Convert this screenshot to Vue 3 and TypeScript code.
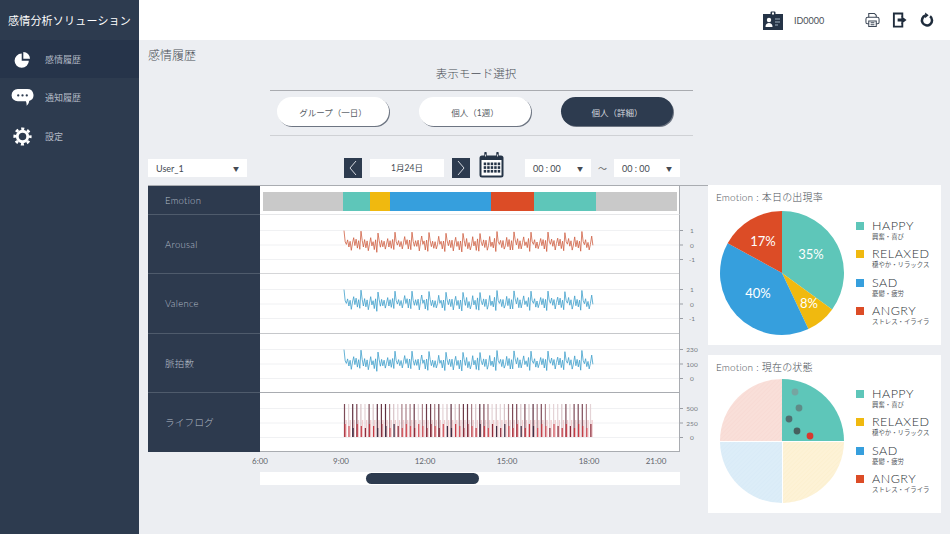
<template>
  <div class="app">
    <aside class="sidebar">
      <div class="brand">感情分析ソリューション</div>
      <nav>
        <a class="nav-item active">
          <svg class="nav-icon" viewBox="0 0 24 24" fill="#fff">
            <path d="M11 4.500A9 9 0 1 0 20 13.500H11Z" />
            <path d="M13 2.500A8.500 8.500 0 0 1 21.500 11H13Z" />
          </svg>
          <span>感情履歴</span>
        </a>
        <a class="nav-item">
          <svg class="nav-icon chat" viewBox="0 0 24 20" fill="#fff">
            <path d="M7 1h10a6.500 6.500 0 0 1 2 12.700c0 1.800 -1 3.700 -2.800 5.100c.3 -1.600 .1 -3 -.6 -4.800H7A6.500 6.500 0 0 1 7 1Z" />
            <circle cx="7.500" cy="7.800" r="1.200" fill="#2d3b4f" />
            <circle cx="12" cy="7.800" r="1.200" fill="#2d3b4f" />
            <circle cx="16.500" cy="7.800" r="1.200" fill="#2d3b4f" />
          </svg>
          <span>通知履歴</span>
        </a>
        <a class="nav-item">
          <svg class="nav-icon" viewBox="0 0 24 24" fill="none" stroke="#fff">
            <circle cx="12" cy="12" r="6.600" stroke-width="3.600" />
            <circle cx="12" cy="12" r="9.800" stroke-width="3.400" stroke-dasharray="3.900 3.800" stroke-dashoffset="1.950" />
          </svg>
          <span>設定</span>
        </a>
      </nav>
    </aside>

    <div class="page">
      <header class="topbar">
        <svg class="id-card" viewBox="0 0 20 19">
          <path d="M7.500 3V1.500a1 1 0 0 1 1 -1h3a1 1 0 0 1 1 1V3H20v16H0V3Z" fill="#253447" />
          <rect x="9" y="1.500" width="2" height="2" fill="#fff" />
          <circle cx="6" cy="9" r="2.200" fill="#fff" />
          <path d="M2.500 16c0 -3 1.500 -4 3.500 -4s3.500 1 3.500 4Z" fill="#fff" />
          <path d="M12 8h5M12 11h5M12 14h3" stroke="#9fb0c0" stroke-width="1.200" />
        </svg>
        <span class="user-id">ID0000</span>
        <div class="tools">
          <svg class="tool printer" viewBox="0 0 16 16" fill="none" stroke="#3b4655" stroke-width="1.100">
            <path d="M4 5V1h6l2 2v2" />
            <path d="M4 12H2.500A1.500 1.500 0 0 1 1 10.500V7a2 2 0 0 1 2 -2h10a2 2 0 0 1 2 2v3.500a1.500 1.500 0 0 1 -1.500 1.500H12" />
            <path d="M4 9h8v6H4ZM6 11h4M6 13h4" />
          </svg>
          <svg class="tool" viewBox="0 0 16 16" fill="#1f2c3c">
            <path d="M1 0h11v5h-2V2H3v12h7v-3h2v5H1Z" />
            <path d="M6 6.500h4V3.800L15.500 8 10 12.200V9.500H6Z" />
          </svg>
          <svg class="tool power" viewBox="0 0 16 16" fill="none">
            <path d="M11.800 4.100A5.400 5.400 0 1 1 7 3.200" stroke="#1f2c3c" stroke-width="2.700" />
            <path d="M6.500 0v6.200L10.300 3Z" fill="#1f2c3c" />
          </svg>
        </div>
      </header>

      <main class="content">
        <h1 class="page-title">感情履歴</h1>
        <section class="mode">
          <div class="mode-title">表示モード選択</div>
          <div class="mode-buttons">
            <button v-for="m in modes" :key="m.label" class="mode-btn" :class="{ selected: m.selected }">{{ m.label }}</button>
          </div>
        </section>

        <div class="workspace">
          <div class="controls">
            <div class="select user-select"><span>User_1</span><i>▼</i></div>
            <button class="step prev">
              <svg viewBox="0 0 18 20" fill="none" stroke="#e6e9ee" stroke-width="0.900"><path d="M12 3 6 10l6 7" /></svg>
            </button>
            <div class="date">1月24日</div>
            <button class="step">
              <svg viewBox="0 0 18 20" fill="none" stroke="#e6e9ee" stroke-width="0.900"><path d="m6 3 6 7-6 7" /></svg>
            </button>
            <svg class="calendar" viewBox="0 0 25 26">
              <rect x="0.500" y="3.500" width="24" height="22" rx="2.500" fill="#253447" />
              <rect x="2.500" y="8" width="20" height="15.500" fill="#fff" />
              <path d="M6.500 1v5M18.500 1v5" stroke="#253447" stroke-width="2.400" stroke-linecap="round" />
              <path d="M6.500 2.500v2M18.500 2.500v2" stroke="#fff" stroke-width="0.800" />
              <g fill="#253447">
                <template v-for="r in 3" :key="r">
                  <rect v-for="c in 5" :key="c" :x="1.200 + c * 3.500" :y="6.800 + r * 3.700" width="2.500" height="2.700" />
                </template>
              </g>
            </svg>
            <div class="select time-select first"><span>00 : 00</span><i>▼</i></div>
            <span class="tilde">～</span>
            <div class="select time-select"><span>00 : 00</span><i>▼</i></div>
          </div>

          <div class="chart-col">
            <div class="chart">
              <div class="row-label emotion-label">Emotion</div>
              <div class="emotion-cell">
                <div class="emotion-bar">
                  <span v-for="(s, i) in segments" :key="i" :style="{ width: s.w + 'px', background: s.color }"></span>
                </div>
              </div>
              <template v-for="row in rows" :key="row.label">
                <div class="row-label" :class="{ last: row.label === 'ライフログ' }" :style="{ height: row.h + 'px' }">{{ row.label }}</div>
                <svg class="plot" width="448" :height="row.h" :viewBox="`0 0 448 ${row.h}`">
                  <rect width="420" :height="row.h" fill="#fff" />
                  <line v-for="t in row.ticks" :key="t.y" x1="0" x2="420" :y1="t.y" :y2="t.y" stroke="#f0f1f3" />
                  <line v-for="t in row.ticks" :key="'m' + t.y" x1="420" x2="423" :y1="t.y" :y2="t.y" stroke="#9a9ea5" />
                  <text v-for="t in row.ticks" :key="'t' + t.y" x="432" :y="t.y + 2.500" text-anchor="middle" class="tick">{{ t.label }}</text>
                  <polyline v-if="row.color" :points="wave" fill="none" :stroke="row.color" stroke-width="0.800" />
                  <g v-else>
                    <line v-for="(b, i) in bars" :key="i" :x1="b.x" :x2="b.x" :y1="b.top" y2="44" :stroke="b.color" :stroke-width="b.w" />
                  </g>
                  <line x1="0" x2="420" :y1="row.h - 0.500" :y2="row.h - 0.500" :stroke="row.line" />
                  <line x1="419.500" x2="419.500" y1="0" :y2="row.h" stroke="#a9acb1" />
                </svg>
              </template>
            </div>
            <svg class="time-axis" width="560" height="16" viewBox="0 0 560 16">
              <text v-for="t in times" :key="t.label" :x="t.x" y="10" text-anchor="middle">{{ t.label }}</text>
            </svg>
            <div class="scrollbar"><div class="thumb"></div></div>
          </div>

          <div class="panels">
            <section v-for="p in panels" :key="p.title" class="panel" :class="p.kind">
              <h2>{{ p.title }}</h2>
              <div class="panel-body">
                <svg class="pie" width="126" height="126" viewBox="-63 -63 126 126">
                  <defs>
                    <pattern v-for="q in hatch" :id="q.id + p.kind" :key="q.id" width="3" height="3" patternUnits="userSpaceOnUse" patternTransform="rotate(45)">
                      <rect width="3" height="3" :fill="q.bg" />
                      <line x1="0" x2="0" y1="0" y2="3" :stroke="q.fg" stroke-width="1" />
                    </pattern>
                  </defs>
                  <template v-if="p.kind === 'share'">
                    <path v-for="s in slices" :key="s.label" :d="s.d" :fill="s.color" />
                    <text v-for="s in slices" :key="'l' + s.label" :x="s.tx" :y="s.ty" text-anchor="middle" class="pct">{{ s.label }}</text>
                  </template>
                  <template v-else>
                    <path d="M0 -62A62 62 0 0 1 62 0H0Z" fill="#5ec6b9" />
                    <path d="M62 1A62 62 0 0 1 1 62V1Z" fill="url(#hatch-ystate)" />
                    <path d="M0 62A62 62 0 0 1 -62 1H0Z" fill="url(#hatch-bstate)" />
                    <path d="M-62 0A62 62 0 0 1 0 -62V0Z" fill="url(#hatch-rstate)" />
                    <circle v-for="(d, i) in dots" :key="i" :cx="d.x" :cy="d.y" r="3.400" :fill="d.color" :opacity="d.o" />
                  </template>
                </svg>
                <ul class="legend">
                  <li v-for="l in legend" :key="l.name">
                    <i :style="{ background: l.color }"></i>
                    <div>
                      <strong>{{ l.name }}</strong>
                      <small>{{ l.sub }}</small>
                    </div>
                  </li>
                </ul>
              </div>
            </section>
          </div>
        </div>
      </main>
    </div>
  </div>
</template>

<script setup lang="ts">
const modes = [
  { label: 'グループ（一日）', selected: false },
  { label: '個人（1週）', selected: false },
  { label: '個人（詳細）', selected: true },
]

const TEAL = '#5ec6b9'
const YELLOW = '#f0b90f'
const BLUE = '#369fdd'
const RED = '#dc4c26'
const GREY = '#c9c9c9'

const segments = [
  { w: 80, color: GREY },
  { w: 27, color: TEAL },
  { w: 20, color: YELLOW },
  { w: 101, color: BLUE },
  { w: 43, color: RED },
  { w: 62, color: TEAL },
  { w: 81, color: GREY },
]

// one period of the signal, repeated with a little noise
const shape = [-14, -4, 2, -5, 4, -3, 7, 0, -8, 2, -4, 6, -5, 8]
const noise = (i: number) => Math.abs((Math.sin(i * 12.9898) * 43758.5453) % 1)

const wave = Array.from({ length: 206 }, (_, i) => {
  const y = 29 + shape[i % 14] * 0.85 + (noise(i) - 0.5) * 3
  return `${(84 + i * 1.214).toFixed(1)},${y.toFixed(1)}`
}).join(' ')

const tallColors = ['#7d4a57', '#d8c3c7', '#5f3040', '#a98088', '#e4d3d6', '#6c3a48']
const lowColors = ['#c63a44', '#3f2f45', '#d4525a', '#8f2b3a']
const bars: { x: number; top: number; color: string; w: number }[] = []
for (let i = 0; i < 61; i++) {
  const x = 84.5 + i * 4.1
  const n = noise(i + 7)
  bars.push({ x: x + 1.6, top: 27, color: '#f2cdd0', w: 1.4 })
  bars.push({ x, top: 11, color: tallColors[Math.floor(n * 6)], w: 1.2 })
  bars.push({ x: x + 0.4, top: 31 + (i % 3) * 2, color: lowColors[Math.floor(n * 4)], w: 1.2 })
}

const rows = [
  { label: 'Arousal', h: 59, color: '#cf5f42', line: '#d5d6d8', ticks: [{ y: 15.5, label: '1' }, { y: 30, label: '0' }, { y: 44.5, label: '-1' }] },
  { label: 'Valence', h: 60, color: '#3f9fcb', line: '#c6c8cb', ticks: [{ y: 15.5, label: '1' }, { y: 30, label: '0' }, { y: 44.5, label: '-1' }] },
  { label: '脈拍数', h: 59, color: '#3f9fcb', line: '#a9acb1', ticks: [{ y: 15.5, label: '230' }, { y: 30, label: '100' }, { y: 44.5, label: '0' }] },
  { label: 'ライフログ', h: 59, color: '', line: '#a9acb1', ticks: [{ y: 15.5, label: '500' }, { y: 30, label: '250' }, { y: 44.5, label: '0' }] },
]

const times = [
  { label: '6:00', x: 112 },
  { label: '9:00', x: 193 },
  { label: '12:00', x: 277 },
  { label: '15:00', x: 359 },
  { label: '18:00', x: 441 },
  { label: '21:00', x: 508 },
]

const R = 62
const pieData = [
  { share: 35, color: TEAL, label: '35%', tx: 29, ty: -14.5 },
  { share: 8, color: YELLOW, label: '8%', tx: 27, ty: 34.5 },
  { share: 40, color: BLUE, label: '40%', tx: -24, ty: 24.5 },
  { share: 17, color: RED, label: '17%', tx: -19, ty: -27.5 },
]

let acc = 0
const point = (pct: number) => {
  const a = (pct / 100) * Math.PI * 2
  return [Math.sin(a) * R, -Math.cos(a) * R]
}
const slices = pieData.map((p) => {
  const [x0, y0] = point(acc)
  const [x1, y1] = point(acc + p.share)
  acc += p.share
  return {
    ...p,
    d: `M0 0L${x0.toFixed(2)} ${y0.toFixed(2)}A${R} ${R} 0 0 1 ${x1.toFixed(2)} ${y1.toFixed(2)}Z`,
  }
})

const hatch = [
  { id: 'hatch-y', bg: '#fdf2d6', fg: '#fbeecb' },
  { id: 'hatch-b', bg: '#dcedf8', fg: '#d6e9f6' },
  { id: 'hatch-r', bg: '#f9dfd9', fg: '#f7d8d1' },
]

const dots = [
  { x: 13, y: -49, color: '#7f9a99', o: 0.75 },
  { x: 17, y: -33, color: '#5f8482', o: 0.9 },
  { x: 7, y: -22, color: '#4f6f70', o: 1 },
  { x: 15, y: -10, color: '#46605f', o: 1 },
  { x: 28, y: -5, color: '#d8382f', o: 1 },
]

const legend = [
  { name: 'HAPPY', sub: '興奮・喜び', color: TEAL },
  { name: 'RELAXED', sub: '穏やか・リラックス', color: YELLOW },
  { name: 'SAD', sub: '憂鬱・疲労', color: BLUE },
  { name: 'ANGRY', sub: 'ストレス・イライラ', color: RED },
]

const panels = [
  { title: 'Emotion : 本日の出現率', kind: 'share' },
  { title: 'Emotion : 現在の状態', kind: 'state' },
]
</script>

<style>
html,
body {
  margin: 0;
  background: #eceef2;
}
</style>

<style scoped>
.app {
  display: flex;
  width: 950px;
  height: 534px;
  overflow: hidden;
  font-family: Lato, "Noto Sans CJK JP", sans-serif;
  color: #4a4f57;
  background: #eceef2;
}

.sidebar {
  width: 139px;
  flex: none;
  background: #2d3b4f;
  color: #fff;
}

.brand {
  height: 40px;
  line-height: 41px;
  padding-left: 8px;
  font-size: 11px;
  letter-spacing: 0.2px;
  white-space: nowrap;
}

.nav-item {
  display: flex;
  align-items: center;
  height: 39px;
  font-size: 9px;
  color: #b3bac5;
}

.nav-item.active {
  height: 38px;
  background: #26344a;
}

.nav-icon {
  width: 19px;
  height: 19px;
  margin: 0 13px;
  flex: none;
}

.nav-icon.chat {
  width: 23px;
  margin: 0 11px;
}

.page {
  flex: 1;
  min-width: 0;
}

.topbar {
  display: flex;
  align-items: center;
  height: 40px;
  background: #fff;
  padding-left: 624px;
  box-sizing: border-box;
}

.id-card {
  width: 20px;
  height: 19px;
}

.user-id {
  margin-left: 11px;
  font-size: 9px;
  color: #4a4f57;
}

.tools {
  display: flex;
  align-items: center;
  gap: 12px;
  margin-left: 41px;
}

.tool {
  width: 15px;
  height: 16px;
}

.content {
  padding: 7px 0 0 9px;
}

.page-title {
  margin: 0;
  height: 16px;
  font-size: 12px;
  line-height: 18px;
  font-weight: 300;
  color: #4a4f57;
}

.mode {
  width: 423px;
  margin-left: 122px;
  border-bottom: 1px solid #cfd1d5;
}

.mode-title {
  height: 27px;
  padding-right: 11px;
  line-height: 22px;
  text-align: center;
  font-size: 11.500px;
  font-weight: 300;
  color: #4a4f57;
  border-bottom: 1px solid #a9abb0;
}

.mode-buttons {
  display: flex;
  gap: 30px;
  padding: 6px 0 9px 7px;
}

.mode-btn {
  width: 112px;
  height: 29px;
  padding: 0;
  border: none;
  border-radius: 15px;
  background: #fff;
  box-shadow: 1px 1px 0 #6d7582;
  font: inherit;
  font-size: 8.500px;
  color: #555b64;
}

.mode-btn.selected {
  background: #2d3b4f;
  color: #d5d9df;
}

.workspace {
  display: grid;
  grid-template-columns: 560px 233px;
  grid-template-rows: 20px auto;
  row-gap: 7px;
  margin-top: 22px;
}

.controls {
  grid-column: 1 / 3;
  display: flex;
  align-items: center;
}

.select {
  display: flex;
  align-items: center;
  justify-content: space-between;
  height: 18px;
  box-sizing: border-box;
  padding: 0 8px;
  background: #fff;
  font-size: 9px;
  color: #444a53;
}

.select i {
  font-style: normal;
  font-size: 6px;
}

.user-select {
  width: 99px;
}

.step {
  display: block;
  width: 18px;
  height: 20px;
  padding: 0;
  border: none;
  background: #2d3b4f;
}

.step svg {
  display: block;
}

.prev {
  margin-left: 97px;
}

.date {
  width: 74px;
  height: 18px;
  margin: 0 8px;
  background: #fff;
  font-size: 8.500px;
  line-height: 18px;
  text-align: center;
  color: #444a53;
}

.calendar {
  width: 25px;
  height: 26px;
  margin: -6px 0 0 9px;
}

.time-select {
  width: 66px;
}

.first {
  margin-left: 21px;
}

.tilde {
  width: 23px;
  text-align: center;
  font-size: 9px;
  color: #666;
}

.chart {
  display: grid;
  grid-template-columns: 112px 448px;
  width: 560px;
  border-top: 1px solid #a9acb1;
}

.row-label {
  display: flex;
  align-items: center;
  padding-left: 17px;
  box-sizing: border-box;
  background: #2d3a4e;
  border-bottom: 1px solid #4f5b6c;
  font-size: 9.500px;
  font-weight: 300;
  letter-spacing: 0.3px;
  color: #b4bcc8;
}

.row-label.last {
  border-bottom-color: #2d3a4e;
}

.emotion-label {
  height: 29px;
}

.emotion-cell {
  width: 420px;
  height: 29px;
  box-sizing: border-box;
  padding: 6px 0 0 3px;
  background: #fff;
  border-right: 1px solid #a9acb1;
  border-bottom: 1px solid #e6e7e9;
}

.emotion-bar {
  display: flex;
  height: 19px;
}

.emotion-bar span {
  display: block;
  flex: none;
}

.plot {
  display: block;
}

.tick {
  font-size: 6.500px;
  fill: #777c83;
}

.time-axis {
  display: block;
  margin-top: 2px;
}

.time-axis text {
  font-size: 8px;
  fill: #5f646b;
}

.scrollbar {
  width: 420px;
  height: 13px;
  margin: 2px 0 0 112px;
  padding-top: 1px;
  box-sizing: border-box;
  background: #fff;
}

.thumb {
  width: 113px;
  height: 11px;
  margin-left: 106px;
  border-radius: 6px;
  background: #2d3b4f;
}

.panels {
  display: flex;
  flex-direction: column;
  gap: 10px;
}

.panel {
  width: 233px;
  height: 160px;
  box-sizing: border-box;
  padding: 6px 0 0 8px;
  background: #fff;
}

.panel.state {
  height: 158px;
}

.panel h2 {
  margin: 0;
  height: 14px;
  font-size: 10px;
  line-height: 12px;
  font-weight: 300;
  letter-spacing: 0.2px;
  color: #4a4f57;
}

.panel-body {
  display: flex;
  margin: 5px 0 0 3px;
}

.state .panel-body {
  margin-top: 3px;
}

.pie {
  display: block;
  flex: none;
}

.pct {
  font-size: 13px;
  fill: #fff;
}

.legend {
  list-style: none;
  margin: 10px 0 0 11px;
  padding: 0;
}

.legend li {
  display: flex;
  height: 28.300px;
}

.legend i {
  display: block;
  flex: none;
  width: 8px;
  height: 8px;
  margin-top: 2px;
  margin-right: 8px;
}

.legend strong {
  display: block;
  font-size: 12.500px;
  line-height: 12px;
  font-weight: 300;
  letter-spacing: 0.5px;
  color: #2a2f36;
}

.legend small {
  display: block;
  font-size: 6.400px;
  line-height: 9px;
  color: #555a62;
  white-space: nowrap;
}
</style>
